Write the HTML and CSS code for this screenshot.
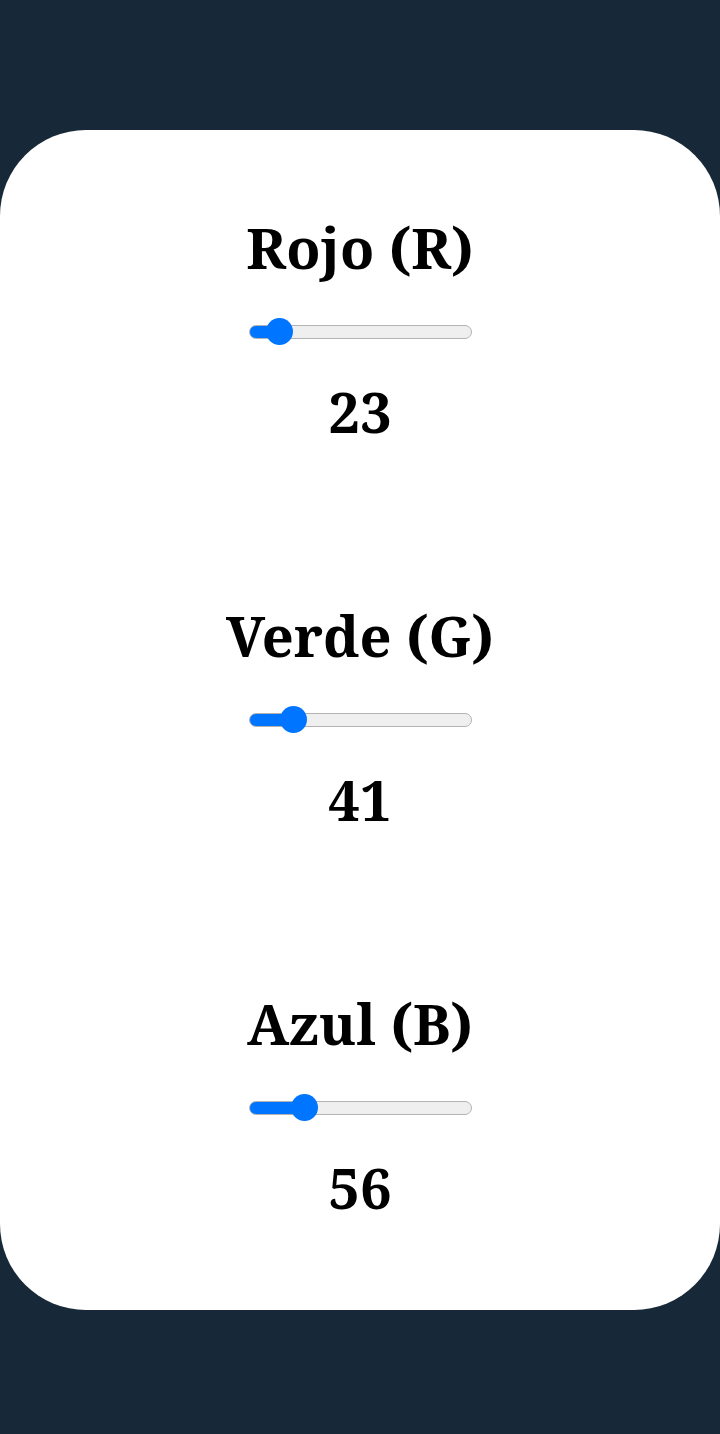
FILE: index.html
```html
<!DOCTYPE html>
<html lang="es">
<head>
<meta charset="utf-8">
<meta name="viewport" content="width=device-width, initial-scale=1">
<title>Colores RGB</title>
<link rel="stylesheet" href="styles.css">
</head>
<body>
<main class="panel">
  <section class="channel">
    <label class="name" for="red">Rojo (R)</label>
    <input class="slider" style="--value: 23" type="range" id="red" min="0" max="255" value="23">
    <output class="value" for="red">23</output>
  </section>
  <section class="channel">
    <label class="name" for="green">Verde (G)</label>
    <input class="slider" style="--value: 41" type="range" id="green" min="0" max="255" value="41">
    <output class="value" for="green">41</output>
  </section>
  <section class="channel">
    <label class="name" for="blue">Azul (B)</label>
    <input class="slider" style="--value: 56" type="range" id="blue" min="0" max="255" value="56">
    <output class="value" for="blue">56</output>
  </section>
</main>
</body>
</html>
```
FILE: styles.css
```css
* {
  box-sizing: border-box;
}

body {
  margin: 0;
  min-height: 100vh;
  padding: 130px 0 124px;
  background: rgb(23, 41, 56);
  font-family: "Noto Serif", "Droid Serif", "DejaVu Serif", serif;
  font-weight: 700;
  font-size: 56px;
  line-height: 78px;
  color: #000;
}

.panel {
  display: flex;
  flex-direction: column;
  gap: 146px;
  padding: 78px 0 84px;
  border-radius: 86px;
  background: #fff;
}

.channel {
  display: flex;
  flex-direction: column;
  align-items: center;
}

.slider {
  appearance: none;
  width: 223px;
  height: 28px;
  margin: 32px 0 26px;
  background: transparent;
}

.slider::-webkit-slider-runnable-track {
  --fill: calc(14px + (100% - 28px) * var(--value) / 255);
  height: 14px;
  border: 1px solid #b2b2b2;
  border-radius: 7px;
  background: linear-gradient(to right, #0075ff var(--fill), #efefef var(--fill)) border-box;
}

.slider::-webkit-slider-thumb {
  appearance: none;
  width: 27px;
  height: 27px;
  margin-top: -8px;
  margin-left: -1px;
  border-radius: 50%;
  background: #0075ff;
}
```
